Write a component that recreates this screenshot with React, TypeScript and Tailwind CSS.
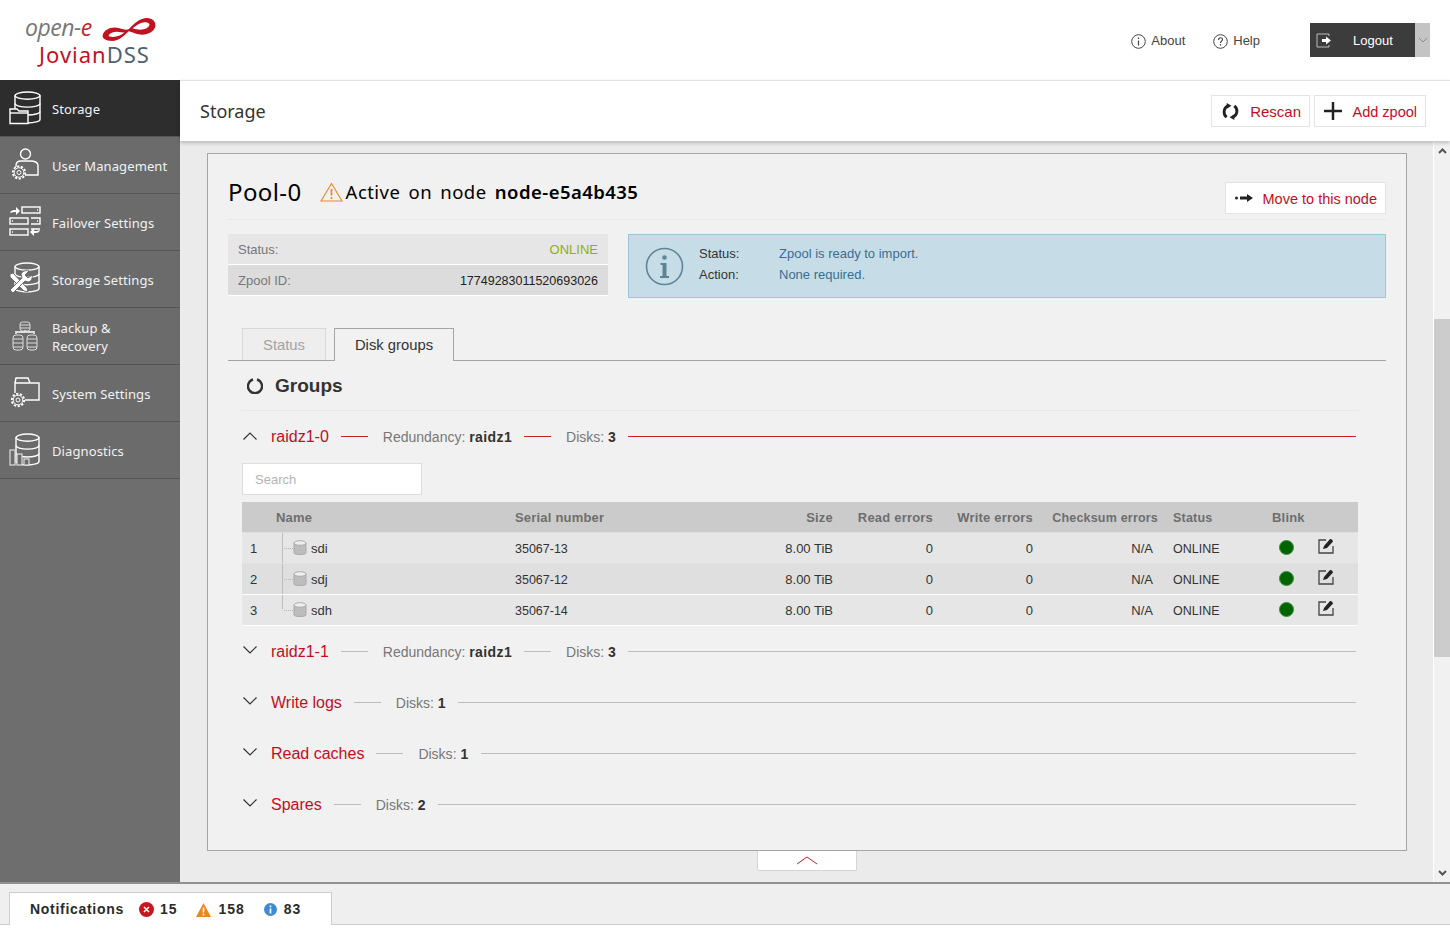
import React from "react";

const S = { fill: "none", stroke: "currentColor", strokeWidth: 1.4 } as const;

function Cyl({ x = 7, y = 1, w = 22, h = 29 }: { x?: number; y?: number; w?: number; h?: number }) {
  const rx = w / 2;
  const ry = 3.6;
  const cx = x + rx;
  const step = (h - ry * 2) / 3;
  return (
    <g {...S}>
      <ellipse cx={cx} cy={y + ry} rx={rx} ry={ry} />
      <path d={`M${x} ${y + ry}V${y + h - ry}A${rx} ${ry} 0 0 0 ${x + w} ${y + h - ry}V${y + ry}`} />
      <path d={`M${x} ${y + ry + step}A${rx} ${ry} 0 0 0 ${x + w} ${y + ry + step}`} />
      <path d={`M${x} ${y + ry + step * 2}A${rx} ${ry} 0 0 0 ${x + w} ${y + ry + step * 2}`} />
    </g>
  );
}

function Gear({ cx, cy, r = 5 }: { cx: number; cy: number; r?: number }) {
  return (
    <g>
      <circle cx={cx} cy={cy} r={r + 1.4} fill="#6b6b6b" stroke="currentColor" strokeWidth="1.9" strokeDasharray="2.2 1.6" />
      <circle cx={cx} cy={cy} r={r} fill="#6b6b6b" stroke="currentColor" strokeWidth="1" />
      <circle cx={cx} cy={cy} r={r * 0.42} fill="none" stroke="currentColor" strokeWidth="1" />
    </g>
  );
}

function StorageIcon() {
  return (
    <svg width="32" height="34" viewBox="0 0 32 34" className="text-white">
      <Cyl x={6} y={1} w={25} h={31} />
      <path d="M1 18h7l2 2h9v12.500H1z" fill="#2d2d2d" stroke="currentColor" strokeWidth="1.400" />
      <path d="M1 22h18" stroke="currentColor" strokeWidth="1.400" />
    </svg>
  );
}
function UserIcon() {
  return (
    <svg width="32" height="34" viewBox="0 0 32 34" className="text-white">
      <circle cx="16.500" cy="6" r="5" {...S} />
      <path d="M7 20v-2.500c0-3 2-4.500 5-4.500h9c5 0 8 1 8 4.500V27H16" {...S} />
      <Gear cx={10} cy={24.500} r={4.800} />
    </svg>
  );
}
function FailoverIcon() {
  return (
    <svg width="32" height="32" viewBox="0 0 32 32" className="text-white">
      <g {...S}>
        <rect x="13" y="1" width="18" height="6" />
        <rect x="1" y="12" width="18" height="6" />
        <rect x="1" y="23" width="18" height="6" />
        <path d="M22 12h9v6h-9M22 23h9" />
      </g>
      <path d="M28 4h1M3 15h1M3 26h1M28 15h1" stroke="currentColor" strokeWidth="1.500" />
      <path d="M1 7c1-3 3-3 6-3V1l4 4-4 4V6C5 6 3 6 1 7z" fill="currentColor" />
      <path d="M31 24c-1 3-3 3-6 3v3l-4-4 4-4v3c2 0 4 0 6-1z" fill="currentColor" />
    </svg>
  );
}
function StorageSettingsIcon() {
  return (
    <svg width="32" height="34" viewBox="0 0 32 34" className="text-white">
      <Cyl x={6} y={1} w={24} h={29} />
      <path d="M1 12l3-1 14 15 1 4-4-1L1 15z" fill="currentColor" stroke="#6b6b6b" strokeWidth="1" />
      <path d="M4 31l-3-3 12-12-1-4c1-3 5-4 8-3l-4 4 3 3 4-3c1 3-1 7-4 7l-3-1z" fill="currentColor" stroke="#6b6b6b" strokeWidth="1" />
    </svg>
  );
}
function BackupIcon() {
  return (
    <svg width="28" height="30" viewBox="0 0 28 30" className="text-[#dddddd]">
      <g fill="none" stroke="currentColor" strokeWidth="1">
        <rect x="9" y="1" width="10" height="9" rx="2.500" />
        <path d="M9 4h10M9 7h10" />
        <rect x="2" y="14" width="10" height="15" rx="3" />
        <path d="M2 18h10M2 22h10M2 26h10" />
        <rect x="16" y="14" width="10" height="15" rx="3" />
        <path d="M16 18h10M16 22h10M16 26h10" />
      </g>
      <path d="M14 9v3M5 13v-2h18v2" stroke="currentColor" strokeWidth="1.800" fill="none" />
    </svg>
  );
}
function SystemIcon() {
  return (
    <svg width="32" height="32" viewBox="0 0 32 32" className="text-white">
      <path d="M6 16V6h24v17H16" {...S} />
      <path d="M6 6l1-5h12l2 5" {...S} />
      <Gear cx={9} cy={23} r={4.800} />
    </svg>
  );
}
function DiagnosticsIcon() {
  return (
    <svg width="32" height="34" viewBox="0 0 32 34" className="text-white">
      <Cyl x={7} y={1} w={23} h={31} />
      <g fill="#6b6b6b" stroke="#dddddd" strokeWidth="1.200">
        <rect x="1" y="17" width="5" height="15" />
        <rect x="8" y="21" width="5" height="11" />
        <rect x="15" y="26" width="5" height="6" />
      </g>
    </svg>
  );
}

const NAV: { label: React.ReactNode; icon: React.ReactNode; active?: boolean }[] = [
  { label: "Storage", icon: <StorageIcon />, active: true },
  { label: "User Management", icon: <UserIcon /> },
  { label: "Failover Settings", icon: <FailoverIcon /> },
  { label: "Storage Settings", icon: <StorageSettingsIcon /> },
  { label: <>Backup &amp;<br />Recovery</>, icon: <BackupIcon /> },
  { label: "System Settings", icon: <SystemIcon /> },
  { label: "Diagnostics", icon: <DiagnosticsIcon /> },
];

function Sidebar() {
  return (
    <aside className="w-[180px] shrink-0 bg-[#6e6e6e] font-['Noto_Sans',sans-serif]">
      {NAV.map((n, i) => (
        <div
          key={i}
          className={`flex h-[57px] items-center border-b border-[#555555] pl-[9px] text-[13px] leading-[18px] tracking-[0.1px] text-[#f2f2f2] ${
            n.active ? "bg-[#2d2d2d]" : "bg-[#6b6b6b]"
          }`}
        >
          <div className="flex w-[32px] justify-center">{n.icon}</div>
          <div className="ml-[11px] pt-[1px]">{n.label}</div>
        </div>
      ))}
    </aside>
  );
}

function Logo() {
  return (
    <div className="flex w-[180px] flex-col pl-[25px] pt-[13px]">
      <div className="flex h-[28px] items-center">
        <span className="font-['Open_Sans',sans-serif] text-[23px] font-medium italic leading-[28px] tracking-[-0.5px] text-[#777777]">
          open-<span className="text-[#c1272d]">e</span>
        </span>
        <svg width="54" height="26" viewBox="20 25 162 78" className="ml-[10px] translate-y-[3px]">
          <path
            fillRule="evenodd"
            d="M22 80C25 62 50 52 70 58C85 62 92 65 100 62C115 45 135 28 155 28C172 28 182 40 180 52C178 68 160 78 140 78C125 78 115 72 100 68C88 80 72 97 50 97C32 97 20 90 22 80ZM40 80C45 72 58 68 70 70C78 71 84 72 88 71C78 80 65 85 53 85C45 85 39 84 40 80ZM112 59C125 47 140 39 152 41C160 42 164 46 162 50C159 58 148 63 136 63C127 63 119 62 112 59Z"
            fill="#c1121f"
          />
        </svg>
      </div>
      <div className="ml-[14px] mt-[1px] font-['Noto_Sans',sans-serif] text-[22px] font-normal leading-[24px] tracking-[1px] text-[#c1121f]">
        Jovian<span className="text-[#4c6271]">DSS</span>
      </div>
    </div>
  );
}

function Header() {
  return (
    <header className="flex h-[80px] shrink-0 bg-white font-['Liberation_Sans',sans-serif]">
      <Logo />
      <div className="ml-auto flex items-start pr-[20px] pt-[23px]">
        <div className="mt-[10px] flex items-center gap-[5px] text-[13px] leading-[16px] text-[#444444]">
          <svg width="15" height="15" viewBox="0 0 15 15">
            <circle cx="7.500" cy="7.500" r="6.800" fill="none" stroke="#444444" />
            <path d="M7.500 3.500v1.500M7.500 6.500v5" stroke="#444444" strokeWidth="1.200" />
          </svg>
          About
        </div>
        <div className="ml-[28px] mt-[10px] flex items-center gap-[5px] text-[13px] leading-[16px] text-[#444444]">
          <svg width="15" height="15" viewBox="0 0 15 15">
            <circle cx="7.500" cy="7.500" r="6.800" fill="none" stroke="#444444" />
            <path d="M5.500 6c0-3 4-3 4-.500 0 1.500-2 1.500-2 3.500M7.500 10v1.500" fill="none" stroke="#444444" strokeWidth="1.100" />
          </svg>
          Help
        </div>
        <div className="ml-[50px] flex h-[34px]">
          <div className="flex w-[105px] items-center bg-[#3c3c3c] pl-[6px] text-[13px] text-white">
            <svg width="16" height="15" viewBox="0 0 16 15">
              <path d="M13 3V1H1v13h12v-2" fill="none" stroke="#bbbbbb" strokeWidth="1" />
              <path d="M6 6h4V3.500l5 4-5 4V9H6z" fill="white" />
            </svg>
            <span className="ml-[21px] translate-y-[1px]">Logout</span>
          </div>
          <div className="flex w-[15px] items-center justify-center bg-[#c4c4c4]">
            <svg width="10" height="6" viewBox="0 0 10 6">
              <path d="M1 1l4 4 4-4" fill="none" stroke="#8d8d8d" />
            </svg>
          </div>
        </div>
      </div>
    </header>
  );
}

function OutlineButton({ icon, label, className, labelClass }: { icon: React.ReactNode; label: string; className: string; labelClass: string }) {
  return (
    <div className={`flex items-center border border-[#e3e3e3] bg-white text-[#c30e1f] ${className}`}>
      {icon}
      <span className={`ml-auto ${labelClass}`}>{label}</span>
    </div>
  );
}

function TitleBar() {
  return (
    <div className="relative z-10 flex h-[61px] shrink-0 items-center border-t border-[#e2e2e2] bg-white pl-[20px] pr-[24px] shadow-[0_2px_4px_rgba(0,0,0,0.22)]">
      <div className="font-['Noto_Sans',sans-serif] text-[18px] text-[#333333]">Storage</div>
      <div className="ml-auto flex gap-[4px]">
        <OutlineButton
          className="h-[32px] w-[99px] pl-[9px] pr-[8px] text-[15px]"
          labelClass="translate-y-[1px]"
          label="Rescan"
          icon={
            <svg width="19" height="19" viewBox="0 0 20 20">
              <path d="M7.500 4A7 7 0 0 0 6 16M12.500 16A7 7 0 0 0 14 4" fill="none" stroke="#222222" strokeWidth="3" />
              <path d="M6 1l5 3-5 3zM14 13l-5 3 5 3z" fill="#222222" />
            </svg>
          }
        />
        <OutlineButton
          className="h-[32px] w-[112px] pl-[9px] pr-[8px] text-[14.500px]"
          labelClass="translate-y-[2px]"
          label="Add zpool"
          icon={
            <svg width="18" height="18" viewBox="0 0 18 18">
              <path d="M9 0v18M0 9h18" stroke="#222222" strokeWidth="2.500" />
            </svg>
          }
        />
      </div>
    </div>
  );
}

function Chevron({ up }: { up?: boolean }) {
  return (
    <svg width="14" height="8" viewBox="0 0 14 8" className={`shrink-0 ${up ? "-translate-y-[1px]" : "-translate-y-[2px]"}`}>
      <path d={up ? "M.5 7.500L7 1l6.500 6.500" : "M.5.500L7 7 13.500.500"} fill="none" stroke="#333333" strokeWidth="1.200" />
    </svg>
  );
}

function Meta({ k, v }: { k: string; v: string }) {
  return (
    <span className="whitespace-nowrap text-[14px] text-[#777777]">
      {k}: <b className="tracking-[0.4px] text-[#333333]">{v}</b>
    </span>
  );
}

function GroupRow({ name, redundancy, disks, active }: { name: string; redundancy?: string; disks: number; active?: boolean }) {
  const line = active ? "bg-[#c8202c]" : "bg-[#bcbcbc]";
  return (
    <div className="flex h-[51px] items-center pl-[1px] pr-[2px]">
      <Chevron up={active} />
      <span className="ml-[14px] whitespace-nowrap text-[16px] text-[#c30e1f]">{name}</span>
      <span className={`ml-[12px] h-px w-[27px] shrink-0 ${line}`} />
      {redundancy && (
        <>
          <span className="ml-[15px]">
            <Meta k="Redundancy" v={redundancy} />
          </span>
          <span className={`ml-[12px] h-px w-[27px] shrink-0 ${line}`} />
        </>
      )}
      <span className="ml-[15px]">
        <Meta k="Disks" v={String(disks)} />
      </span>
      <span className={`ml-[12px] h-px flex-1 ${line}`} />
    </div>
  );
}

function DiskIcon() {
  return (
    <svg width="14" height="16" viewBox="0 0 14 16">
      <path d="M1 3v10c0 2 12 2 12 0V3z" fill="#bdbdbd" stroke="#aaaaaa" />
      <ellipse cx="7" cy="3" rx="6" ry="2.300" fill="#eeeeee" stroke="#aaaaaa" />
    </svg>
  );
}

function EditIcon() {
  return (
    <svg width="16" height="16" viewBox="0 0 16 16">
      <path d="M8 2H1v13h14V8" fill="none" stroke="#444444" strokeWidth="1.300" />
      <path d="M5 11l1-3 6-7c1-.500 3 1 3 2.500l-6 6.500z" fill="#222222" />
    </svg>
  );
}

const COLS = {
  n: "w-[34px] shrink-0 translate-y-[1px]",
  name: "w-[239px] shrink-0",
  serial: "w-[218px] shrink-0 translate-y-[1px]",
  size: "w-[100px] shrink-0 translate-y-[1px] text-right",
  read: "w-[100px] shrink-0 translate-y-[1px] text-right",
  write: "w-[100px] shrink-0 translate-y-[1px] text-right",
  check: "w-[125px] shrink-0 translate-y-[1px] text-right",
  status: "w-[99px] shrink-0 translate-y-[1px] pl-[15px]",
};

function DiskTable() {
  const rows = [
    { n: 1, name: "sdi", serial: "35067-13", bg: "bg-[#e6e6e6]", sep: "border-[#e2e2e2]" },
    { n: 2, name: "sdj", serial: "35067-12", bg: "bg-[#dfdfdf]", sep: "border-white" },
    { n: 3, name: "sdh", serial: "35067-14", bg: "bg-[#e6e6e6]", sep: "border-white" },
  ];
  return (
    <div className="mt-[7px] text-[13px] text-[#333333]">
      <div className="flex h-[31px] items-center border-b border-[#dedede] bg-[#cbcbcb] font-bold tracking-[0.2px] text-[#6e6e6e]">
        <div className={COLS.n} />
        <div className={`${COLS.name} translate-y-[1px]`}>Name</div>
        <div className={COLS.serial}>Serial number</div>
        <div className={COLS.size}>Size</div>
        <div className={COLS.read}>Read errors</div>
        <div className={COLS.write}>Write errors</div>
        <div className={`${COLS.check} text-[12.500px]`}>Checksum errors</div>
        <div className={`${COLS.status} text-[12.500px]`}>Status</div>
        <div className="ml-[15px] translate-y-[1px]">Blink</div>
      </div>
      {rows.map((r, i) => (
        <div key={r.n} className={`flex h-[31px] items-center border-b ${r.sep} ${r.bg}`}>
          <div className={`${COLS.n} pl-[8px]`}>{r.n}</div>
          <div className={`${COLS.name} relative flex h-full items-center`}>
            <span className={`absolute left-[6px] top-0 w-px bg-[#bdbdbd] ${i === 2 ? "h-[14px]" : "h-full"}`} />
            <span className="absolute left-[8px] top-[15px] w-[9px] border-t border-dotted border-[#b5b5b5]" />
            <span className="ml-[17px] flex items-center">
              <DiskIcon />
            </span>
            <span className="ml-[4px] translate-y-[1px]">{r.name}</span>
          </div>
          <div className={`${COLS.serial} text-[12.500px]`}>{r.serial}</div>
          <div className={COLS.size}>8.00 TiB</div>
          <div className={COLS.read}>0</div>
          <div className={COLS.write}>0</div>
          <div className={`${COLS.check} pr-[5px]`}>N/A</div>
          <div className={`${COLS.status} text-[12.500px]`}>ONLINE</div>
          <div className="ml-[22px] h-[15px] w-[15px] -translate-y-[1px] rounded-full border border-[#3f8f3f] bg-[#006400]" />
          <div className="ml-[24px] -translate-y-[2px]">
            <EditIcon />
          </div>
        </div>
      ))}
    </div>
  );
}

function Panel() {
  return (
    <section className="ml-[27px] mt-[12px] h-[698px] w-[1200px] border border-[#a5a5a5] bg-[#f1f1f1] px-[20px]">
      <div className="flex h-[66px] border-b border-[#e8e8e8] pt-[11px] font-['Noto_Sans',sans-serif] text-black">
        <div className="flex h-[53px] items-center">
          <span className="text-[24px] tracking-[0.4px]">Pool-0</span>
          <svg width="23" height="20" viewBox="0 0 23 20" className="ml-[18px]">
            <path d="M11.500 1.500L22 19H1z" fill="none" stroke="#e8892b" strokeWidth="1.100" />
            <path d="M11.500 7v6.500M11.500 15v2" stroke="#e8892b" strokeWidth="1.700" />
          </svg>
          <span className="ml-[3px] whitespace-nowrap text-[18.500px] tracking-[0.45px] [word-spacing:3px]">
            Active on node <span className="font-semibold">node-e5a4b435</span>
          </span>
        </div>
        <div className="ml-auto mt-[17px] flex h-[32px] w-[161px] items-center border border-[#e3e3e3] bg-white pl-[9px] pr-[8px] font-['Liberation_Sans',sans-serif] text-[14.500px] text-[#c30e1f]">
          <svg width="19" height="8" viewBox="0 0 19 8">
            <circle cx="1.500" cy="4" r="1.500" fill="#222222" />
            <path d="M5 2.500h7V0l6 4-6 4V5.500H5z" fill="#222222" />
          </svg>
          <span className="ml-auto translate-y-[2px] whitespace-nowrap">Move to this node</span>
        </div>
      </div>

      <div className="mt-[14px] flex h-[64px] gap-[20px]">
        <div className="w-[380px] text-[13px]">
          <div className="flex h-[31px] items-center justify-between border-b border-white bg-[#e6e6e6] px-[10px]">
            <span className="translate-y-[1px] text-[#777777]">Status:</span>
            <span className="translate-y-[1px] text-[#8fb011]">ONLINE</span>
          </div>
          <div className="flex h-[31px] items-center justify-between border-b border-white bg-[#dcdcdc] px-[10px]">
            <span className="translate-y-[1px] text-[#777777]">Zpool ID:</span>
            <span className="translate-y-[1px] text-[12.500px] text-[#222222]">17749283011520693026</span>
          </div>
        </div>
        <div className="flex flex-1 items-center border border-[#9cc3d6] bg-[#c6dde7] pl-[16px] text-[13px]">
          <svg width="39" height="39" viewBox="0 0 39 39">
            <circle cx="19.500" cy="19.500" r="18" fill="none" stroke="#5f8496" strokeWidth="1.600" />
            <circle cx="19.500" cy="10.500" r="2.300" fill="#5f8496" />
            <path d="M15.500 16h6v13h2.500v2h-9v-2h2.500V18h-2z" fill="#5f8496" />
          </svg>
          <div className="-mt-[4px] ml-[15px] grid grid-cols-[80px_auto] gap-y-[5px] leading-[16px]">
            <span className="text-[#333333]">Status:</span>
            <span className="text-[#3a6d92]">Zpool is ready to import.</span>
            <span className="text-[#333333]">Action:</span>
            <span className="text-[#3a6d92]">None required.</span>
          </div>
        </div>
      </div>

      <div className="mt-[30px] flex h-[33px] items-end gap-[8px] border-b border-[#a5a5a5] pl-[14px] text-[14.800px]">
        <div className="flex h-[32px] w-[84px] items-center justify-center border border-b-0 border-[#d8d8d8] bg-[#eeeeee] pt-[1px] text-[#a3a3a3]">Status</div>
        <div className="-mb-px flex h-[33px] w-[120px] items-center justify-center border border-b-0 border-[#a5a5a5] bg-[#f1f1f1] pt-[1px] text-[#333333]">Disk groups</div>
      </div>

      <div className="ml-[14px] mr-[28px]">
        <div className="flex h-[50px] items-center border-b border-[#e8e8e8] pl-[5px]">
          <svg width="16" height="16" viewBox="0 0 16 16">
            <path d="M6 1.500a7 7 0 1 0 4 0" fill="none" stroke="#333333" strokeWidth="2.400" />
          </svg>
          <span className="ml-[12px] translate-y-[1px] text-[19px] font-bold text-[#333333]">Groups</span>
        </div>
        <GroupRow name="raidz1-0" redundancy="raidz1" disks={3} active />
        <div className="mt-[1px] flex h-[32px] w-[180px] items-center border border-[#dedede] bg-white pl-[12px] text-[13px] text-[#b3b3b3]">
          <span className="translate-y-[1px]">Search</span>
        </div>
        <DiskTable />
        <GroupRow name="raidz1-1" redundancy="raidz1" disks={3} />
        <GroupRow name="Write logs" disks={1} />
        <GroupRow name="Read caches" disks={1} />
        <GroupRow name="Spares" disks={2} />
      </div>
    </section>
  );
}

function Scrollbar() {
  return (
    <div className="flex w-[17px] shrink-0 flex-col items-center border-l border-white bg-[#f1f1f1]">
      <svg width="9" height="6" viewBox="0 0 9 6" className="mt-[7px] shrink-0">
        <path d="M1 5l3.500-3.500L8 5" fill="none" stroke="#555555" strokeWidth="2" />
      </svg>
      <div className="mt-[165px] h-[338px] w-full shrink-0 bg-[#cccccc]" />
      <svg width="9" height="6" viewBox="0 0 9 6" className="mb-[6px] mt-auto shrink-0">
        <path d="M1 1l3.500 3.500L8 1" fill="none" stroke="#555555" strokeWidth="2" />
      </svg>
    </div>
  );
}

function Notifications() {
  return (
    <footer className="h-[48px] shrink-0 border-t-2 border-[#919191] bg-white font-['Liberation_Sans',sans-serif]">
      <div className="h-[41px] border-b border-[#cccccc] bg-[#efefef] pl-[9px] pt-[8px]">
        <div className="flex h-[33px] w-[323px] items-center border border-b-0 border-[#cccccc] bg-white pl-[20px] pt-[1px] text-[14px] font-bold tracking-[0.7px] text-[#2b2b2b]">
          <span>Notifications</span>
          <svg width="15" height="15" viewBox="0 0 15 15" className="ml-[15px]">
            <circle cx="7.500" cy="7.500" r="7.500" fill="#c8161d" />
            <path d="M5 5l5 5M10 5l-5 5" stroke="white" strokeWidth="1.500" />
          </svg>
          <span className="ml-[6px] tracking-[1px]">15</span>
          <svg width="15" height="14" viewBox="0 0 15 14" className="ml-[19px]">
            <path d="M7.500 0L15 14H0z" fill="#e8891c" />
            <path d="M7.500 4.500v5M7.500 10.500v2" stroke="white" strokeWidth="1.500" />
          </svg>
          <span className="ml-[7px] tracking-[1px]">158</span>
          <svg width="13" height="13" viewBox="0 0 13 13" className="ml-[19px]">
            <circle cx="6.500" cy="6.500" r="6.500" fill="#3f8bd0" />
            <path d="M6.500 2.500v1.800M6.500 5.500v5" stroke="white" strokeWidth="1.700" />
          </svg>
          <span className="ml-[7px] tracking-[1px]">83</span>
        </div>
      </div>
    </footer>
  );
}

export default function App() {
  return (
    <div className="flex h-[930px] w-[1450px] flex-col overflow-hidden bg-white font-['Liberation_Sans',sans-serif]">
      <Header />
      <div className="flex min-h-0 flex-1">
        <Sidebar />
        <main className="flex min-w-0 flex-1 flex-col">
          <TitleBar />
          <div className="flex min-h-0 flex-1 bg-[#ebebeb]">
            <div className="min-w-0 flex-1">
              <Panel />
              <div className="ml-[577px] flex h-[20px] w-[100px] items-center justify-center rounded-b-[2px] border border-t-0 border-[#d5d5d5] bg-white">
                <svg width="22" height="9" viewBox="0 0 22 9">
                  <path d="M1 8l10-7 10 7" fill="none" stroke="#c8202c" strokeWidth="1" />
                </svg>
              </div>
            </div>
            <Scrollbar />
          </div>
        </main>
      </div>
      <Notifications />
    </div>
  );
}
